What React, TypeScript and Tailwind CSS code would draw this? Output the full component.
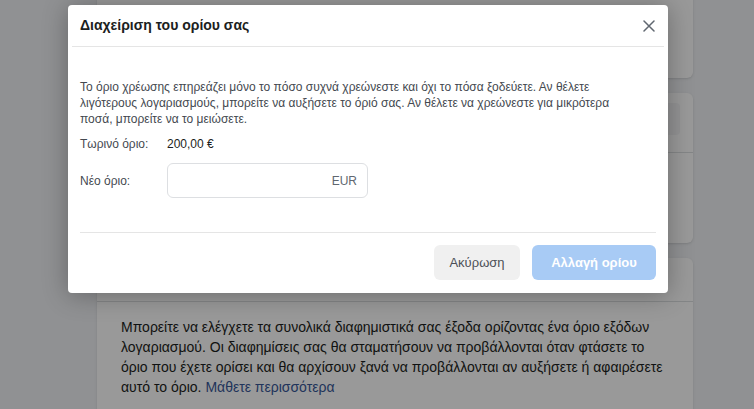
import React from 'react';

const App: React.FC = () => {
  return (
    <div className="relative w-[754px] h-[409px] overflow-hidden bg-[#f0f2f5] font-['Liberation_Sans',Arial,sans-serif]">
      {/* page behind the dialog */}
      <div className="ml-[97px] w-[596px] flex flex-col gap-[15px] -mt-[10px]">
        <div className="h-[88px] bg-white rounded-md shadow-sm"></div>

        <div className="h-[150px] bg-white rounded-md shadow-sm">
          <div className="pt-[10px] px-[13px]">
            <div className="h-[32px] bg-[#f5f6f7] rounded"></div>
          </div>
          <div className="mt-[17px] border-t border-[#dddfe2]"></div>
        </div>

        <div className="h-[200px] bg-white rounded-md shadow-sm">
          <div className="h-[44px] border-b border-[#dddfe2]"></div>
          <p className="px-6 pt-[15px] text-[14px] leading-[20px] text-[#1c1e21]">
            Μπορείτε να ελέγχετε τα συνολικά διαφημιστικά σας έξοδα ορίζοντας ένα όριο εξόδων
            λογαριασμού. Οι διαφημίσεις σας θα σταματήσουν να προβάλλονται όταν φτάσετε το
            όριο που έχετε ορίσει και θα αρχίσουν ξανά να προβάλλονται αν αυξήσετε ή αφαιρέσετε
            αυτό το όριο. <span className="text-[#385898]">Μάθετε περισσότερα</span>
          </p>
        </div>
      </div>

      {/* overlay */}
      <div className="absolute inset-0 bg-black/40"></div>

      {/* dialog */}
      <div className="absolute left-[68px] top-[5px] w-[600px] h-[288px] bg-white rounded-[4px] shadow-[0_2px_26px_rgba(0,0,0,0.3)] flex flex-col">
        <div className="h-[42px] mx-1 border-b border-[#e5e5e5] flex items-center justify-between pl-2 pr-[9px]">
          <h2 className="text-[14px] font-bold text-[#1c1e21]">Διαχείριση του ορίου σας</h2>
          <svg width="12" height="12" viewBox="0 0 12 12" className="text-[#606770]">
            <path d="M1 1 L11 11 M11 1 L1 11" stroke="currentColor" strokeWidth="1.5" strokeLinecap="round" />
          </svg>
        </div>

        <div className="px-3 pt-[32px] text-[12px] text-[#444950]">
          <p className="w-[556px] leading-[16px]">
            Το όριο χρέωσης επηρεάζει μόνο το πόσο συχνά χρεώνεστε και όχι το πόσα ξοδεύετε. Αν θέλετε
            λιγότερους λογαριασμούς, μπορείτε να αυξήσετε το όριό σας. Αν θέλετε να χρεώνεστε για μικρότερα
            ποσά, μπορείτε να το μειώσετε.
          </p>
          <div className="mt-[9px] flex items-center h-[16px]">
            <span className="w-[87px]">Τωρινό όριο:</span>
            <span className="text-[#1c1e21]">200,00 €</span>
          </div>
          <div className="mt-[11px] flex items-center">
            <span className="w-[87px]">Νέο όριο:</span>
            <div className="w-[201px] h-[35px] border border-[#dddfe2] rounded-md flex items-center justify-end pr-[10px]">
              <span className="text-[#606770]">EUR</span>
            </div>
          </div>
        </div>

        <div className="mt-auto mx-3 border-t border-[#e5e5e5] pt-[12px] pb-[13px] flex justify-end gap-3">
          <button className="w-[86px] h-[35px] rounded-md bg-[#f0f0f0] text-[13px] text-[#4b4f56]">Ακύρωση</button>
          <button className="w-[124px] h-[35px] rounded-md bg-[#a8cbf5] text-[13px] font-bold text-white">Αλλαγή ορίου</button>
        </div>
      </div>
    </div>
  );
};

export default App;
